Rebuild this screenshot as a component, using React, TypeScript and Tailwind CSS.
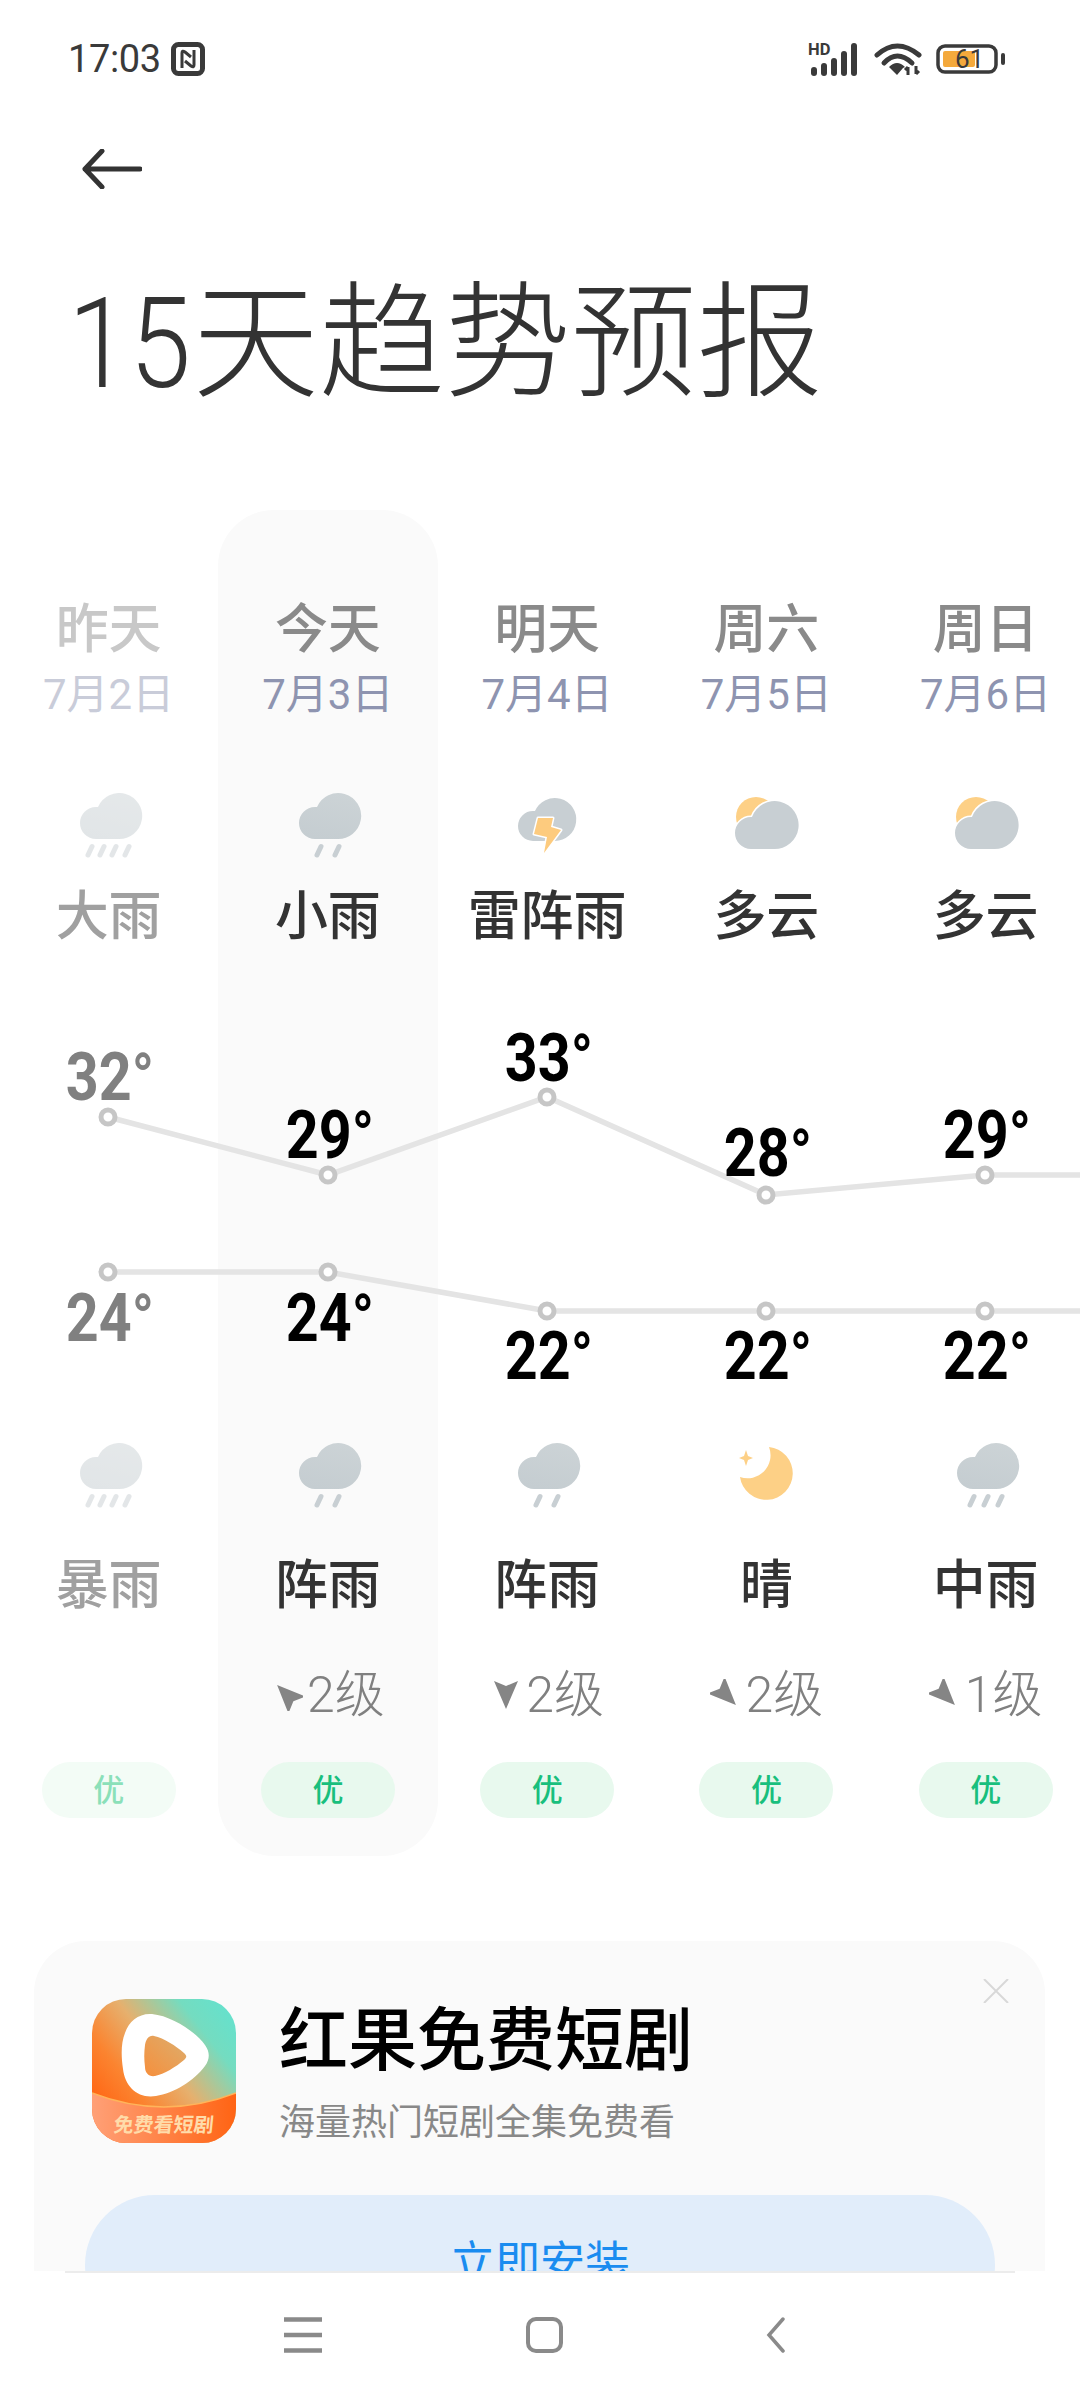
import React from "react";

type IconKind = "rain2" | "rain3" | "rain4" | "thunder" | "partly" | "moon";

const CLOUD = "M27 59 A16 16 0 0 1 27 27 L29 27 A23 23 0 1 1 49 59 Z";

function Cloud({ id }: { id: string }) {
  return (
    <>
      <defs>
        <linearGradient id={id} x1="0.7" y1="0" x2="0.4" y2="1">
          <stop offset="0" stopColor="#ccd3d6" />
          <stop offset="1" stopColor="#c5cdd1" />
        </linearGradient>
      </defs>
      <path d={CLOUD} fill={`url(#${id})`} />
    </>
  );
}

function Drops({ xs }: { xs: number[] }) {
  return (
    <g stroke="#c8cfd3" strokeWidth="5" strokeLinecap="round">
      {xs.map((x) => (
        <line key={x} x1={x + 2} y1="66.5" x2={x - 2} y2="75" />
      ))}
    </g>
  );
}

function WeatherIcon({ kind, id, dim }: { kind: IconKind; id: string; dim?: boolean }) {
  return (
    <svg viewBox="0 0 80 80" className={dim ? "h-[80px] w-[80px] opacity-50" : "h-[80px] w-[80px]"}>
      {kind === "rain2" && (
        <>
          <Cloud id={id} />
          <Drops xs={[31, 49]} />
        </>
      )}
      {kind === "rain3" && (
        <>
          <Cloud id={id} />
          <Drops xs={[26, 40, 54]} />
        </>
      )}
      {kind === "rain4" && (
        <>
          <Cloud id={id} />
          <Drops xs={[21, 33, 45, 58]} />
        </>
      )}
      {kind === "thunder" && (
        <>
          <path d="M26 61 A15 15 0 0 1 26 31 L28 31 A21.5 21.5 0 1 1 48 61 Z" fill="#c8cfd3" />
          <path
            d="M31 38 L46 38 L44 47 L54 50 L37 73 L40 57 L27 54 Z"
            fill="#fdcb7e"
            stroke="#ffffff"
            strokeWidth="3"
            strokeLinejoin="round"
            paintOrder="stroke"
          />
        </>
      )}
      {kind === "partly" && (
        <>
          <circle cx="30" cy="37" r="20" fill="#fdd086" />
          <path
            d="M25 69 A16 16 0 0 1 25 37 L26 37 A24 24 0 1 1 48 69 Z"
            fill="#c8cfd3"
            stroke="#ffffff"
            strokeWidth="3"
            paintOrder="stroke"
          />
        </>
      )}
      {kind === "moon" && (
        <>
          <path d="M43 17 A26.5 26.5 0 1 1 14 47 A23 23 0 0 0 43 17 Z" fill="#fdd086" />
          <path d="M20 20 L22 26 L27 28 L22 30 L20 36 L18 30 L13 28 L18 26 Z" fill="#fdd086" />
        </>
      )}
    </svg>
  );
}

function WindArrow({ rot }: { rot: number }) {
  return (
    <svg viewBox="-16 -16 32 32" className="h-[32px] w-[32px]">
      <polygon points="-12,-14 0,-9 12,-14 0,14" fill="#858585" transform={`rotate(${rot})`} />
    </svg>
  );
}

const columns = [
  { day: "昨天", date: "7月2日", di: "rain4" as IconKind, dl: "大雨", ni: "rain4" as IconKind, nl: "暴雨", past: true },
  { day: "今天", date: "7月3日", di: "rain2" as IconKind, dl: "小雨", ni: "rain2" as IconKind, nl: "阵雨", wind: "2级", rot: 135, today: true },
  { day: "明天", date: "7月4日", di: "thunder" as IconKind, dl: "雷阵雨", ni: "rain2" as IconKind, nl: "阵雨", wind: "2级", rot: 0 },
  { day: "周六", date: "7月5日", di: "partly" as IconKind, dl: "多云", ni: "moon" as IconKind, nl: "晴", wind: "2级", rot: -45 },
  { day: "周日", date: "7月6日", di: "partly" as IconKind, dl: "多云", ni: "rain3" as IconKind, nl: "中雨", wind: "1级", rot: -45 },
];

const CX = [108, 328, 547, 766, 985];
const highs = [
  { y: 171, t: "32°", ly: 132 },
  { y: 229, t: "29°", ly: 190 },
  { y: 151, t: "33°", ly: 113 },
  { y: 249, t: "28°", ly: 208 },
  { y: 229, t: "29°", ly: 190 },
];
const lows = [
  { y: 326, t: "24°", ly: 373 },
  { y: 326, t: "24°", ly: 373 },
  { y: 365, t: "22°", ly: 411 },
  { y: 365, t: "22°", ly: 411 },
  { y: 365, t: "22°", ly: 411 },
];

function Chart() {
  const hp = highs.map((p, i) => `${CX[i]},${p.y}`).join(" ") + " 1080,229";
  const lp = lows.map((p, i) => `${CX[i]},${p.y}`).join(" ") + " 1080,365";
  return (
    <div className="absolute left-0 top-[436px] h-[484px] w-[1080px]">
      <svg viewBox="0 0 1080 484" className="absolute inset-0 h-[484px] w-[1080px]">
        <polyline points={hp} fill="none" stroke="#e4e4e4" strokeWidth="5.5" />
        <polyline points={lp} fill="none" stroke="#e4e4e4" strokeWidth="5.5" />
        {[...highs, ...lows].map((p, i) => (
          <circle key={i} cx={CX[i % 5]} cy={p.y} r="7" fill="#ffffff" stroke="#c6c6c6" strokeWidth="5" />
        ))}
      </svg>
      {[...highs, ...lows].map((p, i) => (
        <div
          key={i}
          className={
            "absolute w-[160px] scale-x-[0.87] text-center font-[Roboto,sans-serif] text-[66px] font-bold leading-[60px] " +
            (i % 5 === 0 ? "text-[#808080]" : "text-black")
          }
          style={{ left: CX[i % 5] - 78, top: p.ly - 30 }}
        >
          {p.t}
        </div>
      ))}
    </div>
  );
}

function Column({ c, idx }: { c: (typeof columns)[number]; idx: number }) {
  const past = !!c.past;
  return (
    <div
      className={
        "flex w-[219.25px] flex-none flex-col items-center pb-[38px] pt-[88px] " +
        (c.today ? "rounded-[56px] bg-[#fafafa]" : "")
      }
    >
      <div className={"mt-[2px] text-[53px] font-medium leading-[60px] " + (past ? "text-[#c8c8c8]" : "text-[#8a8a8a]")}>{c.day}</div>
      <div className={"mt-[13px] text-[42px] leading-[44px] " + (past ? "text-[#c9ccd9]" : "text-[#8e94b0]")}>{c.date}</div>
      <div className="mt-[63px] h-[80px]">
        <WeatherIcon kind={c.di} id={`d${idx}`} dim={past} />
      </div>
      <div className={"mt-[27px] text-[53px] font-medium leading-[60px] " + (past ? "text-[#a0a0a0]" : "text-[#333333]")}>{c.dl}</div>
      <div className="h-[483px]" />
      <div className="h-[80px]">
        <WeatherIcon kind={c.ni} id={`n${idx}`} dim={past} />
      </div>
      <div className={"mt-[46px] text-[53px] font-medium leading-[60px] " + (past ? "text-[#a0a0a0]" : "text-[#333333]")}>{c.nl}</div>
      <div className="mt-[49px] flex h-[60px] items-center gap-[4px] text-[50px] font-light leading-[60px] text-[#808080]">
        {c.wind && (
          <>
            <WindArrow rot={c.rot as number} />
            <span>{c.wind}</span>
          </>
        )}
      </div>
      <div
        className={
          "mt-[37px] flex h-[56px] w-[134px] items-center justify-center rounded-[28px] text-[31px] font-medium leading-none " +
          (past ? "bg-[#f3fcf6] text-[#8be0b9]" : "bg-[#e8f9ee] text-[#19bf7d]")
        }
      >
        优
      </div>
    </div>
  );
}

function StatusBar() {
  return (
    <div className="flex h-[118px] items-center justify-between pl-[68px] pr-[74px] text-[#3a3a3a]">
      <div className="flex items-center gap-[10px]">
        <span className="text-[38px] leading-[44px] tracking-[-0.4px]">17:03</span>
        <svg viewBox="0 0 34 34" className="h-[34px] w-[34px]">
          <rect x="2.5" y="2.5" width="29" height="29" rx="5" fill="none" stroke="#3a3a3a" strokeWidth="5" />
          <path d="M11 26 V11 Q11 8 14 10 L20 15 M23 8 V23 Q23 26 20 24 L14 19" fill="none" stroke="#3a3a3a" strokeWidth="3" />
        </svg>
      </div>
      <div className="flex items-center gap-[14px]">
        <svg viewBox="0 0 52 34" className="h-[34px] w-[52px]">
          <text x="0" y="13" fontFamily="Roboto, sans-serif" fontWeight="700" fontSize="16.5" fill="#3a3a3a">HD</text>
          <g stroke="#3a3a3a" strokeWidth="6" strokeLinecap="round">
            <line x1="6" y1="28" x2="6" y2="31" />
            <line x1="16" y1="24" x2="16" y2="31" />
            <line x1="26" y1="19" x2="26" y2="31" />
            <line x1="36" y1="12" x2="36" y2="31" />
            <line x1="46" y1="4" x2="46" y2="31" />
          </g>
        </svg>
        <svg viewBox="0 0 48 34" className="h-[34px] w-[48px]">
          <g fill="none" stroke="#3a3a3a" strokeWidth="5" strokeLinecap="round">
            <path d="M3 13 Q23 -5 45 13" />
            <path d="M10 21 Q23 7 38 21" />
          </g>
          <path d="M15 25 Q23 17 31 25 L29 26 L23 33 Z" fill="#3a3a3a" />
          <path d="M34 33 V25 M34 25 L31 28 M42 24 V32 M42 32 L45 29" stroke="#3a3a3a" strokeWidth="3" fill="none" />
        </svg>
        <div className="relative h-[30px] w-[70px]">
          <svg viewBox="0 0 70 30" className="absolute inset-0 h-[30px] w-[70px]">
            <rect x="2" y="2" width="58" height="26" rx="7" fill="#ffffff" stroke="#3a3a3a" strokeWidth="3.5" />
            <rect x="7" y="7" width="32" height="16" rx="2" fill="#f4a93c" />
            <rect x="65" y="9" width="4" height="12" rx="2" fill="#3a3a3a" />
          </svg>
          <span className="absolute left-[19px] top-0 text-[26px] leading-[30px] text-[#3a3a3a]">61</span>
        </div>
      </div>
    </div>
  );
}

function AppLogo() {
  return (
    <svg viewBox="0 0 144 144" className="h-[144px] w-[144px] flex-none">
      <defs>
        <clipPath id="logoClip">
          <rect width="144" height="144" rx="34" />
        </clipPath>
        <linearGradient id="logoBg" x1="1" y1="0.05" x2="0.1" y2="0.75">
          <stop offset="0" stopColor="#62e2cf" />
          <stop offset="0.25" stopColor="#74dcc0" />
          <stop offset="0.55" stopColor="#e6b06e" />
          <stop offset="0.8" stopColor="#fb8430" />
          <stop offset="1" stopColor="#ff6a18" />
        </linearGradient>
        <linearGradient id="logoBand" x1="0" y1="0" x2="1" y2="0">
          <stop offset="0" stopColor="#ffa077" />
          <stop offset="1" stopColor="#ff6414" />
        </linearGradient>
        <linearGradient id="logoPlay" x1="0" y1="1" x2="1" y2="0">
          <stop offset="0" stopColor="#f68f3c" />
          <stop offset="1" stopColor="#dcae6e" />
        </linearGradient>
      </defs>
      <g clipPath="url(#logoClip)">
        <rect width="144" height="144" fill="url(#logoBg)" />
        <path d="M0 94 Q72 122 144 94 V144 H0 Z" fill="url(#logoBand)" />
        <path d="M0 94 Q72 122 144 94" fill="none" stroke="#ffb45a" strokeWidth="1.5" />
        <path
          d="M60 15 C80 17 104 33 113 46 C118 53 118 60 113 67 C102 82 82 94 64 97 C46 100 33 88 31 70 C29 56 29 44 33 34 C37 22 47 14 60 15 Z"
          fill="#ffffff"
        />
        <path
          d="M62 37 C72 39 84 47 92 54 C95 57 95 58 92 61 C84 68 72 75 63 77 C57 78 53 74 53 68 C52 60 52 54 53 46 C54 40 57 36 62 37 Z"
          fill="url(#logoPlay)"
        />
        <text
          x="71"
          y="133"
          textAnchor="middle"
          fontFamily="'Noto Sans CJK SC', sans-serif"
          fontSize="20"
          fontWeight="700"
          fill="#ffdcaa"
          transform="skewX(-6) translate(14 0)"
        >
          免费看短剧
        </text>
      </g>
    </svg>
  );
}

function AdCard() {
  return (
    <div className="relative ml-[34px] mt-[85px] h-[330px] w-[1011px] flex-none overflow-hidden rounded-t-[52px] bg-[#fafafa]">
      <svg viewBox="0 0 26 24" className="absolute left-[949px] top-[38px] h-[24px] w-[26px]">
        <path d="M1 0 L25 24 M25 0 L1 24" stroke="#d8d8d8" strokeWidth="2" />
      </svg>
      <div className="flex pl-[58px] pt-[58px]">
        <AppLogo />
        <div className="ml-[43px]">
          <div className="mt-[3px] text-[69px] font-medium leading-[80px] text-black">红果免费短剧</div>
          <div className="mt-[17px] text-[36px] leading-[48px] text-[#888888]">海量热门短剧全集免费看</div>
        </div>
      </div>
      <div className="ml-[51px] mt-[48px] flex h-[140px] w-[910px] items-center justify-center rounded-[70px] bg-[#e1edfa] pb-[3px] text-[45px] leading-none text-[#1a8cf0]">
        立即安装
      </div>
    </div>
  );
}

function NavBar() {
  return (
    <div className="relative z-10 flex-none bg-white">
      <div className="mx-[65px] h-[2px] bg-[#ececec]" />
      <div className="relative flex h-[127px] items-center justify-between pb-[4px] pl-[284px] pr-[294px]">
        <svg viewBox="0 0 38 36" className="h-[36px] w-[38px]">
          <path d="M0 2.5 H38 M0 18 H38 M0 33.5 H38" stroke="#8a8a8a" strokeWidth="4.5" />
        </svg>
        <div className="h-[36px] w-[37px] rounded-[10px] border-[4px] border-[#8a8a8a]" />
        <svg viewBox="0 0 20 36" className="h-[36px] w-[20px]">
          <path d="M17 2 L3 18 L17 34" fill="none" stroke="#8a8a8a" strokeWidth="3.5" strokeLinecap="round" />
        </svg>
      </div>
    </div>
  );
}

export default function App() {
  return (
    <div className="flex h-[2400px] w-[1080px] flex-col overflow-hidden bg-white font-[Roboto,'Noto_Sans_CJK_SC',sans-serif]">
      <StatusBar />
      <div className="flex h-[102px] items-center pl-[82px]">
        <svg viewBox="0 0 60 40" className="h-[40px] w-[60px]">
          <path d="M20 2 L3 20 L20 38 M3 20 H58" fill="none" stroke="#333333" strokeWidth="5" strokeLinecap="round" strokeLinejoin="round" />
        </svg>
      </div>
      <h1 className="mt-[54px] pl-[68px] text-[126px] font-light leading-[140px] text-[#333333]">
        <span className="mr-[-15px] inline-block origin-left scale-x-[0.88]">15</span>天趋势预报
      </h1>
      <div className="relative mt-[96px] flex-none">
        <div className="ml-[-1px] flex">
          {columns.map((c, i) => (
            <Column key={c.day} c={c} idx={i} />
          ))}
        </div>
        <Chart />
      </div>
      <AdCard />
      <NavBar />
    </div>
  );
}
